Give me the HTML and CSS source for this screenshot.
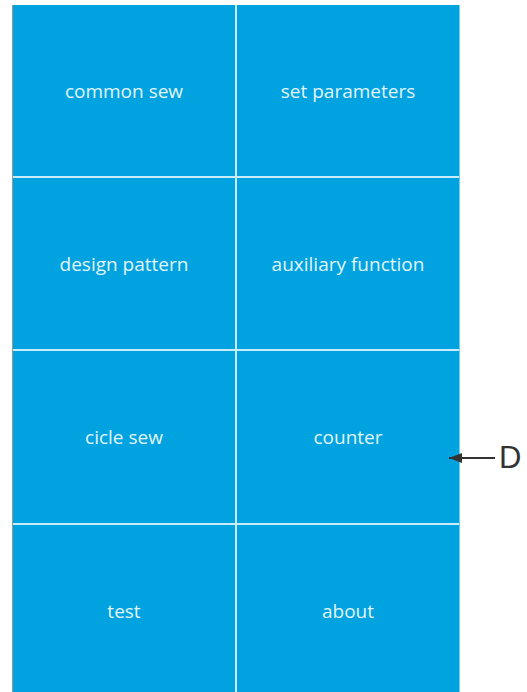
FILE: index.html
```html
<!DOCTYPE html>
<html lang="en">
<head>
    <meta charset="UTF-8">
    <meta name="viewport" content="width=device-width, initial-scale=1.0">
    <title>Main menu</title>
    <link rel="stylesheet" href="styles.css">
</head>
<body>
    <div class="screen">
        <div class="menu">
            <div class="tile">common sew</div>
            <div class="tile">set parameters</div>
            <div class="tile">design pattern</div>
            <div class="tile">auxiliary function</div>
            <div class="tile">cicle sew</div>
            <div class="tile">counter</div>
            <div class="tile">test</div>
            <div class="tile">about</div>
        </div>
        <div class="callout">
            <span class="arrow"></span>
            <span class="label">D</span>
        </div>
    </div>
</body>
</html>
```

FILE: styles.css
```css
body {
    margin: 0;
    padding: 0;
    background: #ffffff;
    font-family: "Open Sans", "DejaVu Sans", sans-serif;
    overflow: hidden;
}
.screen {
    position: relative;
    padding: 5px 0 0 12px;
}
.menu {
    display: grid;
    grid-template-columns: 222px 222px;
    grid-template-rows: 171px 171px 172px 172px;
    gap: 2px 2px;
    width: 446px;
    background: #c8ecf9;
    border-left: 1px solid #9a9a9a;
    border-right: 1px solid #6fcdf0;
}
.tile {
    display: flex;
    align-items: center;
    justify-content: center;
    background: #00a2e0;
    color: #e2f5fc;
    font-size: 19px;
    font-weight: 500;
}
.callout {
    position: absolute;
    left: 449px;
    top: 440px;
    display: flex;
    align-items: center;
    gap: 4px;
}
.arrow {
    position: relative;
    display: block;
    width: 46px;
    height: 2px;
    background: #333333;
}
.arrow::before {
    content: "";
    position: absolute;
    left: 0;
    top: -4px;
    border-top: 5px solid transparent;
    border-bottom: 5px solid transparent;
    border-right: 13px solid #333333;
}
.label {
    font-family: "Liberation Sans", Arial, sans-serif;
    font-size: 31px;
    color: #333333;
}
```
